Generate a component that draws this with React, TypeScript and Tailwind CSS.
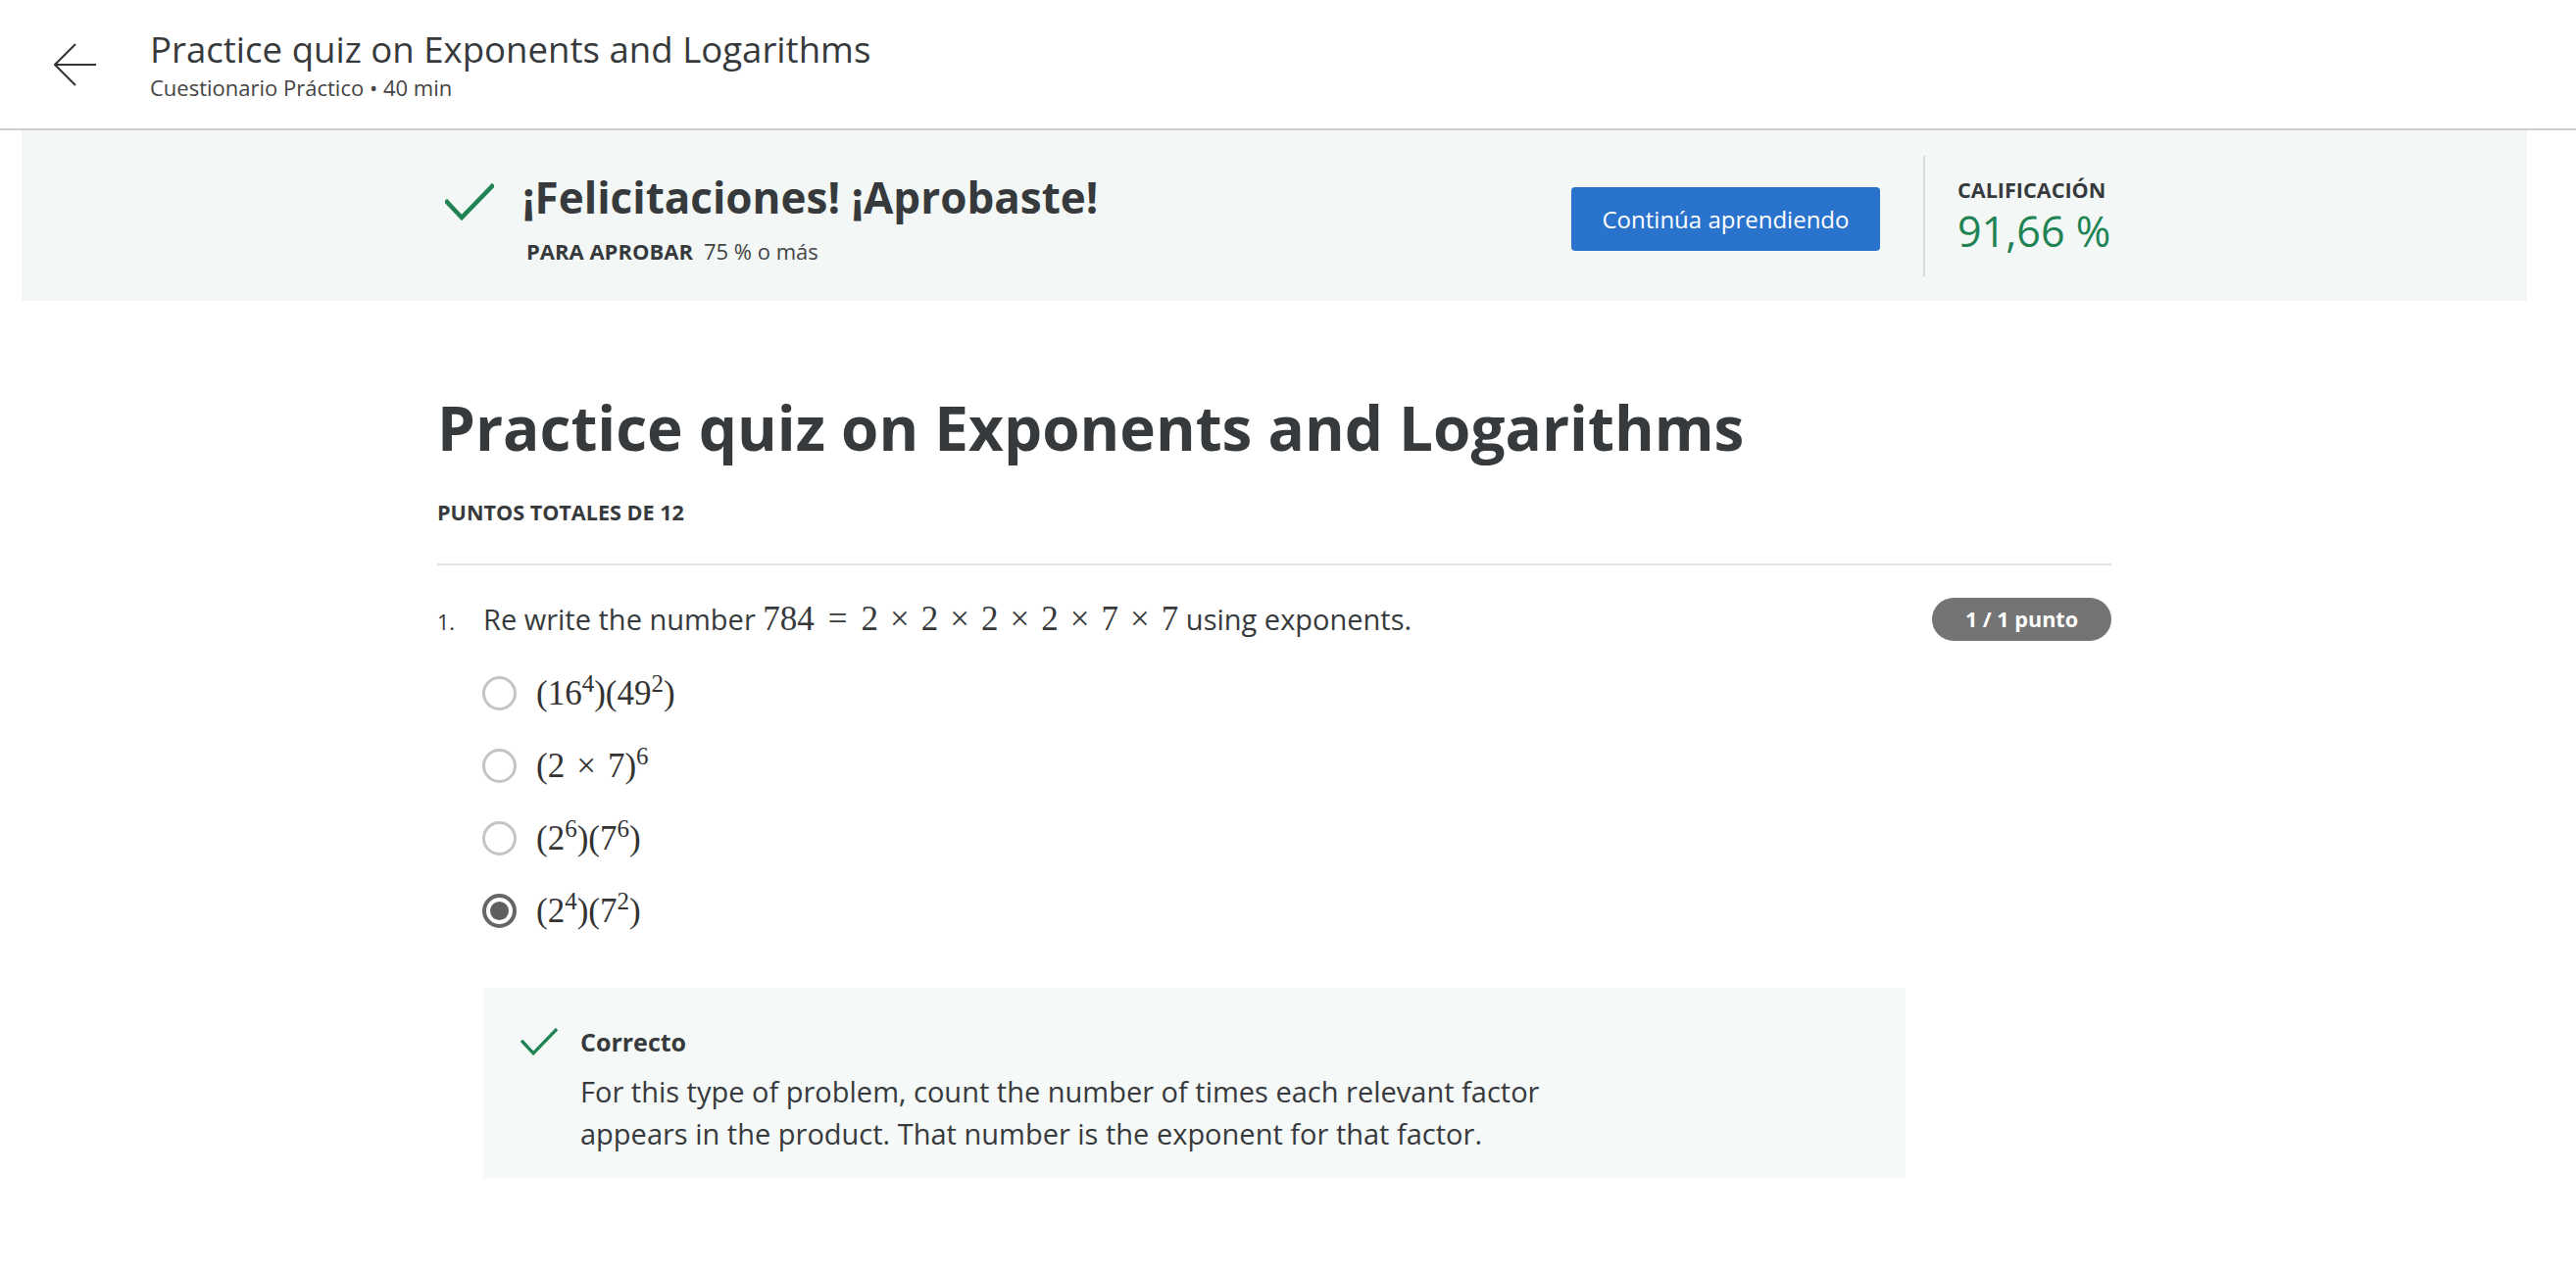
import React from "react";

const Check = ({ className }: { className?: string }) => (
  <svg viewBox="0 0 50 38" className={className} fill="none">
    <polyline points="2,19 17,35 48,3" stroke="#1f8354" strokeWidth="4.5" strokeLinecap="square" />
  </svg>
);

const Radio = ({ checked }: { checked?: boolean }) =>
  checked ? (
    <span className="flex h-[35px] w-[35px] shrink-0 items-center justify-center rounded-full border-[4px] border-[#666]">
      <span className="h-[19px] w-[19px] rounded-full bg-[#5f5f5f]" />
    </span>
  ) : (
    <span className="h-[35px] w-[35px] shrink-0 rounded-full border-[3px] border-[#c4c4c4]" />
  );

const mathFont = "font-['Liberation_Serif','DejaVu_Serif',serif]";

const Times = () => <span className="mx-[12px]">×</span>;

const options = [
  { a: "16", b: "4", c: "49", d: "2" },
  null,
  { a: "2", b: "6", c: "7", d: "6" },
  { a: "2", b: "4", c: "7", d: "2" },
];

export default function App() {
  return (
    <div className="min-h-screen bg-white font-['Open_Sans',sans-serif] text-[#373a3c]">
      <header className="flex h-[133px] items-start border-b-2 border-[#cdcdcd] pl-[55px]">
        <svg viewBox="0 0 44 44" className="mt-[44px] h-[44px] w-[44px]" fill="none">
          <path d="M43 22H2M22 1L1 22l21 21" stroke="#333" strokeWidth="2" />
        </svg>
        <div className="ml-[54px] mt-[27px]">
          <h1 className="text-[36.6px] leading-[46px] text-[#373a3c]">Practice quiz on Exponents and Logarithms</h1>
          <p className="mt-[2px] text-[22px] leading-[28px] text-[#444]">Cuestionario Práctico • 40 min</p>
        </div>
      </header>

      <section className="ml-[22px] mr-[50px] bg-[#f3f8f6]">
        <div className="ml-[424px] flex h-[174px] w-[1708px] items-start">
          <div className="mt-[40px] flex flex-1 items-start pl-[8px]">
            <Check className="mt-[14px] h-[38px] w-[50px]" />
            <div className="ml-[29px]">
              <h2 className="text-[44px] font-bold leading-[56px]">¡Felicitaciones! ¡Aprobaste!</h2>
              <p className="ml-[4px] mt-[13px] text-[22px] leading-[28px]">
                <span className="font-bold">PARA APROBAR</span>
                <span className="ml-[11px] text-[#444]">75 % o más</span>
              </p>
            </div>
          </div>
          <button className="mt-[58px] h-[65px] w-[315px] rounded-[4px] bg-[#2a73cc] text-[24px] text-white">
            Continúa aprendiendo
          </button>
          <div className="ml-[44px] mt-[26px] h-[123px] w-[2px] bg-[#dadada]" />
          <div className="ml-[33px] mt-[47px] w-[157px]">
            <p className="text-[21.6px] font-bold leading-[28px]">CALIFICACIÓN</p>
            <p className="mt-[2px] text-[43px] leading-[52px] text-[#1f8354]">91,66 %</p>
          </div>
        </div>
      </section>

      <main className="ml-[446px] w-[1708px] pt-[90px]">
        <h1 className="text-[62px] font-bold leading-[78px]">Practice quiz on Exponents and Logarithms</h1>
        <p className="mt-[34px] text-[21.6px] font-bold leading-[28px]">PUNTOS TOTALES DE 12</p>
        <div className="mt-[38px] h-[2px] bg-[#e3e3e3]" />

        <div className="mt-[33px] flex h-[44px] items-center justify-between">
          <div className="flex items-baseline">
            <span className="w-[47px] text-[21.6px]">1.</span>
            <p className="text-[29px] leading-[44px]">
              Re write the number{" "}
              <span className={`${mathFont} text-[35px]`}>
                784<span className="mx-[14px]">=</span>2<Times />2<Times />2<Times />2<Times />7<Times />7
              </span>{" "}
              using exponents.
            </p>
          </div>
          <span className="flex h-[44px] w-[183px] items-center justify-center rounded-full bg-[#747474] text-[21.6px] font-bold text-white">
            1 / 1 punto
          </span>
        </div>

        <div className="ml-[46px] mt-[36px] flex flex-col gap-[39px]">
          {options.map((o, i) => (
            <label key={i} className="flex h-[35px] items-center gap-[20px]">
              <Radio checked={i === 3} />
              <span className={`${mathFont} text-[35px] leading-[40px] text-[#333]`}>
                {o ? (
                  <>
                    ({o.a}
                    <sup className="text-[25px]">{o.b}</sup>)({o.c}
                    <sup className="text-[25px]">{o.d}</sup>)
                  </>
                ) : (
                  <>
                    (2<Times />7)<sup className="text-[25px]">6</sup>
                  </>
                )}
              </span>
            </label>
          ))}
        </div>

        <div className="ml-[47px] mt-[61px] w-[1451px] bg-[#f5f9f8] pb-[24px] pl-[38px] pt-[38px]">
          <div className="flex h-[34px] items-center">
            <Check className="h-[28px] w-[38px]" />
            <span className="ml-[23px] text-[25px] font-bold leading-[34px]">Correcto</span>
          </div>
          <p className="mt-[12px] pl-[61px] text-[29px] leading-[43px]">
            For this type of problem, count the number of times each relevant factor
            <br />
            appears in the product. That number is the exponent for that factor.
          </p>
        </div>
      </main>
    </div>
  );
}
